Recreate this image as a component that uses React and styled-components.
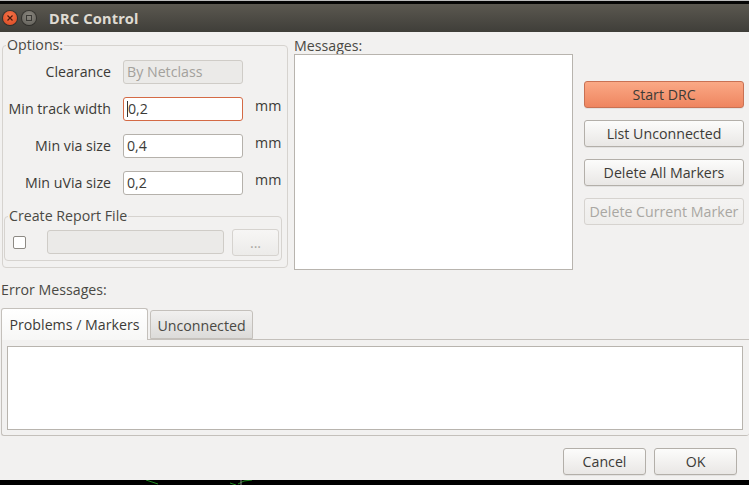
import { styled, createGlobalStyle } from 'styled-components';

const Global = createGlobalStyle`
  html, body {
    margin: 0;
    padding: 0;
    background: #000;
  }
  body {
    font-family: "Open Sans", "Noto Sans", sans-serif;
    font-size: 14.2px;
    color: #3c3b37;
  }
`;

const Screen = styled.div`
  width: 749px;
  height: 485px;
  display: flex;
  flex-direction: column;
  overflow: hidden;
  background: #000;
`;

const TopEdge = styled.div`
  height: 4px;
  background: linear-gradient(#bdbdbd 0 1px, #060606 1px);
`;

const TitleBar = styled.div`
  height: 28px;
  display: flex;
  align-items: center;
  padding-left: 3px;
  gap: 5px;
  background: linear-gradient(#5b5850, #3f3e39);
`;

const WinButton = styled.div`
  width: 14px;
  height: 14px;
  border-radius: 50%;
  display: flex;
  align-items: center;
  justify-content: center;
  background: ${p => (p.$close ? 'radial-gradient(circle at 50% 35%, #f7744a, #d8461f)' : 'radial-gradient(circle at 50% 35%, #8a877f, #5f5d57)')};
  box-shadow: 0 0 0 1px rgba(0, 0, 0, 0.35);
`;

const Title = styled.div`
  margin-left: 8px;
  font-family: "Noto Sans", "Open Sans", sans-serif;
  font-weight: bold;
  font-size: 14.6px;
  color: #dfdbd2;
  letter-spacing: 0.2px;
`;

const Body = styled.div`
  height: 448px;
  background: #f2f1f0;
  display: flex;
  flex-direction: column;
`;

const TopSection = styled.div`
  box-sizing: border-box;
  display: flex;
  height: 238px;
  padding-top: 5px;
  flex-shrink: 0;
`;

const Group = styled.fieldset`
  margin: 0;
  padding: 0;
  border: 1px solid #d6d3cf;
  border-radius: 4px;
  min-width: 0;
`;

const Legend = styled.legend`
  padding: 0 1px;
  margin-left: 3px;
  line-height: 16px;
  color: #4a4944;
`;

const OptionsGroup = styled(Group)`
  margin-left: 2px;
  width: 286px;
  height: 231px;
  box-sizing: border-box;
`;

const FormGrid = styled.div`
  display: grid;
  grid-template-columns: 108px 120px auto;
  column-gap: 12px;
  row-gap: 13px;
  margin-top: 7px;
`;

const Label = styled.div`
  text-align: right;
  align-self: center;
  line-height: 24px;
  white-space: nowrap;
`;

const Unit = styled.div`
  line-height: 16px;
  padding-top: 1px;
`;

const Input = styled.div`
  box-sizing: border-box;
  height: 24px;
  width: ${p => p.$w || 120}px;
  border: 1px solid ${p => (p.$focus ? '#d46a45' : p.$disabled ? '#cfccc7' : '#b5b1ab')};
  border-radius: 3px;
  background: ${p => (p.$disabled ? '#ebeae8' : '#fff')};
  color: ${p => (p.$disabled ? '#a3a19c' : '#3c3b37')};
  padding-left: 3px;
  line-height: 22px;
  display: flex;
  align-items: center;
`;

const Caret = styled.span`
  width: 1px;
  height: 16px;
  background: #333;
`;

const ReportGroup = styled(Group)`
  margin: 13px 5px 0 1px;
  height: 53px;
  box-sizing: border-box;
`;

const ReportRow = styled.div`
  display: flex;
  align-items: center;
  height: 28px;
  margin-top: 4px;
  padding-left: 8px;
`;

const Checkbox = styled.div`
  width: 13px;
  height: 13px;
  box-sizing: border-box;
  border: 1px solid #8d8a84;
  border-radius: 2px;
  background: #fff;
  margin-right: 21px;
`;

const SmallButton = styled.div`
  box-sizing: border-box;
  width: 47px;
  height: 27px;
  margin-left: 8px;
  border: 1px solid #d6d3cf;
  border-radius: 3px;
  background: linear-gradient(#f7f6f5, #ecebe9);
  color: #a9a7a2;
  display: flex;
  align-items: flex-end;
  justify-content: center;
  padding-bottom: 6px;
  line-height: 12px;
`;

const MessagesCol = styled.div`
  margin-left: 6px;
  display: flex;
  flex-direction: column;
`;

const SmallLabel = styled.div`
  line-height: 17px;
  margin-top: ${p => p.$top || 0}px;
  margin-left: ${p => p.$left || 0}px;
  color: #4a4944;
`;

const MessageBox = styled.div`
  box-sizing: border-box;
  width: 279px;
  height: 216px;
  border: 1px solid #b8b4ae;
  background: #fff;
`;

const ActionCol = styled.div`
  margin-left: 11px;
  padding-top: 44px;
  display: flex;
  flex-direction: column;
  gap: 12px;
`;

const Button = styled.div`
  box-sizing: border-box;
  width: ${p => p.$w || 160}px;
  height: 27px;
  border-radius: 3px;
  border: 1px solid ${p => (p.$primary ? '#c97153' : p.$disabled ? '#d6d3cf' : '#b3afa9')};
  background: ${p =>
    p.$primary
      ? 'linear-gradient(#fba985, #ee8560)'
      : p.$disabled
        ? 'linear-gradient(#f4f3f2, #eeedeb)'
        : 'linear-gradient(#fcfcfb, #e9e7e5)'};
  color: ${p => (p.$disabled ? '#a9a7a2' : '#3c3b37')};
  display: flex;
  align-items: center;
  justify-content: center;
  white-space: nowrap;
  box-shadow: ${p => (p.$disabled ? 'none' : '0 1px 0 rgba(0,0,0,0.06)')};
`;

const ErrorSection = styled.div`
  display: flex;
  flex-direction: column;
`;

const Tabs = styled.div`
  display: flex;
  align-items: flex-end;
  gap: 2px;
  margin-top: 9px;
  padding-left: 1px;
  height: 32px;
`;

const Tab = styled.div`
  box-sizing: border-box;
  width: ${p => p.$w}px;
  height: ${p => (p.$active ? 32 : 29)}px;
  border: 1px solid #c4c0bb;
  border-bottom: ${p => (p.$active ? 'none' : '1px solid #c4c0bb')};
  border-radius: 3px 3px 0 0;
  background: ${p => (p.$active ? 'linear-gradient(#ffffff, #f7f7f6)' : 'linear-gradient(#f1f0ef, #dcdbd9)')};
  color: ${p => (p.$active ? '#3c3b37' : '#4a4944')};
  display: flex;
  align-items: center;
  justify-content: center;
  padding-top: ${p => (p.$active ? 0 : 1)}px;
  margin-bottom: ${p => (p.$active ? -1 : 0)}px;
  position: relative;
  z-index: ${p => (p.$active ? 1 : 0)};
`;

const TabPanel = styled.div`
  box-sizing: border-box;
  margin-left: 1px;
  width: 748px;
  height: 97px;
  border: 1px solid #c4c0bb;
  border-right: none;
  border-radius: 0 0 3px 3px;
  background: #f2f1f0;
  padding: 6px 0 0 5px;
`;

const ErrorBox = styled.div`
  box-sizing: border-box;
  width: 736px;
  height: 84px;
  border: 1px solid #b8b4ae;
  background: #fff;
`;

const Footer = styled.div`
  display: flex;
  justify-content: flex-end;
  gap: 8px;
  padding-right: 12px;
  margin-top: 12px;
`;

const BottomEdge = styled.svg`
  display: block;
  width: 749px;
  height: 5px;
  background: #000;
`;

export default function App() {
  return (
    <Screen>
      <Global />
      <TopEdge />
      <TitleBar>
        <WinButton $close>
          <svg width="6" height="6" viewBox="0 0 6 6">
            <path d="M0.5 0.5L5.5 5.5M5.5 0.5L0.5 5.5" stroke="#4a1a0c" strokeWidth="1.2" />
          </svg>
        </WinButton>
        <WinButton>
          <svg width="6" height="6" viewBox="0 0 6 6">
            <rect x="0.5" y="0.5" width="5" height="5" fill="none" stroke="#3a3935" strokeWidth="1" />
          </svg>
        </WinButton>
        <Title>DRC Control</Title>
      </TitleBar>
      <Body>
        <TopSection>
          <OptionsGroup>
            <Legend>Options:</Legend>
            <FormGrid>
              <Label>Clearance</Label>
              <Input $disabled>By Netclass</Input>
              <Unit />
              <Label>Min track width</Label>
              <Input $focus>
                <Caret />
                0,2
              </Input>
              <Unit>mm</Unit>
              <Label>Min via size</Label>
              <Input>0,4</Input>
              <Unit>mm</Unit>
              <Label>Min uVia size</Label>
              <Input>0,2</Input>
              <Unit>mm</Unit>
            </FormGrid>
            <ReportGroup>
              <Legend>Create Report File</Legend>
              <ReportRow>
                <Checkbox />
                <Input $disabled $w={177} />
                <SmallButton>...</SmallButton>
              </ReportRow>
            </ReportGroup>
          </OptionsGroup>
          <MessagesCol>
            <SmallLabel>Messages:</SmallLabel>
            <MessageBox />
          </MessagesCol>
          <ActionCol>
            <Button $primary>Start DRC</Button>
            <Button>List Unconnected</Button>
            <Button>Delete All Markers</Button>
            <Button $disabled>Delete Current Marker</Button>
          </ActionCol>
        </TopSection>
        <ErrorSection>
          <SmallLabel $top={11} $left={1}>Error Messages:</SmallLabel>
          <Tabs>
            <Tab $active $w={147}>Problems / Markers</Tab>
            <Tab $w={103}>Unconnected</Tab>
          </Tabs>
          <TabPanel>
            <ErrorBox />
          </TabPanel>
        </ErrorSection>
        <Footer>
          <Button $w={83}>Cancel</Button>
          <Button $w={83}>OK</Button>
        </Footer>
      </Body>
      <BottomEdge viewBox="0 0 749 5">
        <path d="M146 0L158 4" stroke="#1f8a1f" strokeWidth="1" />
        <path d="M230 3L236 5M238 4L244 1L252 0" stroke="#1f8a1f" strokeWidth="1" />
        <path d="M241 0V5" stroke="#888" strokeWidth="1" />
      </BottomEdge>
    </Screen>
  );
}
